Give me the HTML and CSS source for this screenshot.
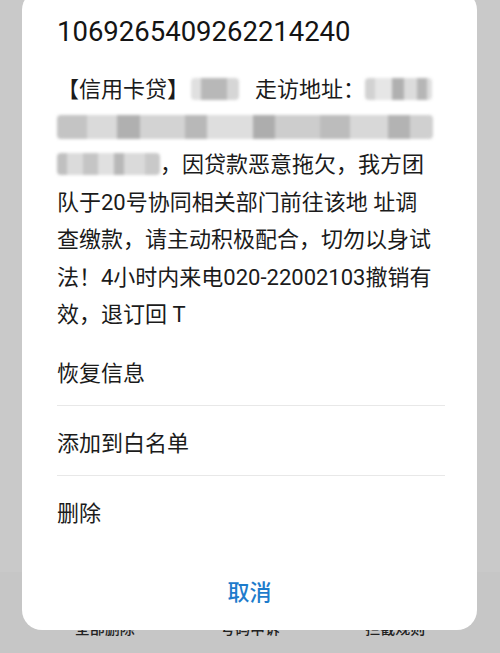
FILE: index.html
```html
<!DOCTYPE html>
<html lang="zh-CN">
<head>
<meta charset="utf-8">
<title>短信</title>
<link rel="stylesheet" href="styles.css">
</head>
<body>
<div class="screen">
  <div class="spacer"></div>
  <div class="toolbar">
    <span class="tool">全部删除</span>
    <span class="tool">号码申诉</span>
    <span class="tool">拦截规则</span>
  </div>

  <div class="dialog">
    <div class="sender">10692654092622142 40</div>
    <div class="message">
      <div class="line">【信用卡贷】<span class="mosaic m1"></span>走访地址：<span class="mosaic m2"></span></div>
      <div class="line"><span class="mosaic m3"></span></div>
      <div class="line"><span class="mosaic m4"></span>，因贷款恶意拖欠，我方团</div>
      <div class="line">队于20号协同相关部门前往该地 址调</div>
      <div class="line">查缴款，请主动积极配合，切勿以身试</div>
      <div class="line">法！4小时内来电020-22002103撤销有</div>
      <div class="line">效，退订回 T</div>
    </div>
    <ul class="menu">
      <li class="item">恢复信息</li>
      <li class="item">添加到白名单</li>
      <li class="item">删除</li>
    </ul>
    <div class="cancel">取消</div>
  </div>
</div>
</body>
</html>
```

FILE: styles.css
```css
* { box-sizing: border-box; }
html, body {
  margin: 0;
  padding: 0;
}
body {
  background: #c9c9c9;
  font-family: Roboto, "Noto Sans CJK SC", "Noto Sans", sans-serif;
  color: #1b1b1b;
}
.screen {
  position: relative;
  width: 500px;
  height: 653px;
  overflow: hidden;
  display: flex;
  flex-direction: column;
}
.spacer {
  flex: 1;
}
.toolbar {
  height: 81px;
  background: #c6c6c6;
  display: grid;
  grid-template-columns: 1fr 1fr 1fr;
  align-items: end;
  padding: 0 32px 14px;
}
.tool {
  text-align: center;
  font-size: 15px;
  line-height: 20px;
  color: #222;
  font-weight: 500;
}
.dialog {
  position: absolute;
  left: 22px;
  top: -10px;
  width: 455px;
  height: 640px;
  background: #fff;
  border-radius: 20px;
  padding: 0 32px 0 35px;
  display: flex;
  flex-direction: column;
}
.sender {
  margin-top: 22px;
  font-size: 27.5px;
  line-height: 40px;
  color: #141414;
  word-spacing: -7px;
}
.message {
  margin-top: 19px;
  font-size: 22px;
  line-height: 37.5px;
  color: #1b1b1b;
  white-space: nowrap;
}
.line {
  height: 37.5px;
}
.mosaic {
  display: inline-block;
  vertical-align: middle;
  height: 22px;
  border-radius: 4px;
  filter: blur(1.8px);
  margin-top: -4px;
  background:
    linear-gradient(90deg,
      #c4c4c4 0 8%, #dadada 8% 16%, #b0b0b0 16% 22%, #d3d3d3 22% 34%,
      #b8b8b8 34% 40%, #dedede 40% 52%, #adadad 52% 58%, #cdcdcd 58% 70%,
      #bcbcbc 70% 78%, #d8d8d8 78% 88%, #b3b3b3 88% 94%, #d0d0d0 94% 100%);
}
.m1 {
  width: 48px;
  margin-left: 2px;
  margin-right: 16px;
  background: linear-gradient(90deg, #e0e0e0 0 20%, #b8b8b8 20% 75%, #d6d6d6 75% 100%);
}
.m2 {
  width: 67px;
  margin-left: 0;
  background: linear-gradient(90deg, #d2d2d2 0 15%, #e6e6e6 15% 40%, #b0b0b0 40% 58%, #dcdcdc 58% 78%, #b6b6b6 78% 92%, #dedede 92% 100%);
}
.m3 {
  width: 376px;
  height: 24px;
}
.m4 {
  width: 103px;
  background: linear-gradient(90deg, #c0c0c0 0 10%, #dbdbdb 10% 25%, #c5c5c5 25% 40%, #e0e0e0 40% 55%, #b8b8b8 55% 65%, #dadada 65% 85%, #c9c9c9 85% 100%);
}
.menu {
  list-style: none;
  margin: 2px 0 0;
  padding: 0;
}
.item {
  height: 70px;
  padding-top: 23px;
  line-height: 30px;
  font-size: 22px;
  color: #1b1b1b;
  border-bottom: 1.5px solid #e8e8e8;
}
.item:last-child {
  border-bottom: none;
}
.cancel {
  margin-top: auto;
  margin-bottom: 17px;
  text-align: center;
  font-size: 22px;
  line-height: 40px;
  color: #1e7ccc;
  font-weight: 500;
  padding-right: 3px;
}
```
